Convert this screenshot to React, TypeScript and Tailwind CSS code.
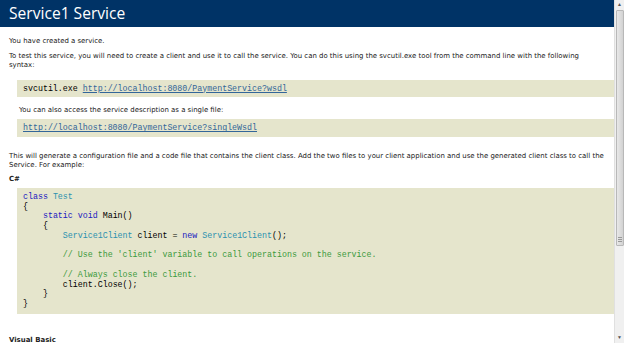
import React from 'react';

const kw = 'text-[#2020c0]';
const type = 'text-[#2b91af]';
const comment = 'text-[#3c9a3c]';

const Code = ({ children, className = '' }: { children: React.ReactNode; className?: string }) => (
  <pre
    className={`ml-[17px] bg-[#e5e5cc] px-[6px] font-['Liberation_Mono','Courier_New',monospace] text-[8.3px] leading-[9.73px] text-black whitespace-pre ${className}`}
  >
    {children}
  </pre>
);

const Link = ({ href }: { href: string }) => (
  <a className="text-[#336699] underline">{href}</a>
);

const Scrollbar = () => (
  <div className="w-[10px] h-full bg-[#f0f0f0] border-l border-[#e0e0e0] flex flex-col items-center">
    <div className="h-[10px] flex items-center justify-center text-[5px] text-[#555]">▲</div>
    <div className="w-[8px] h-[236px] bg-gradient-to-r from-[#e8e8e8] to-[#d2d2d2] border border-[#b8b8b8] rounded-[1px] flex items-end justify-center pb-[3px]">
      <div className="flex flex-col gap-[1px]">
        <div className="w-[4px] h-px bg-[#999]" />
        <div className="w-[4px] h-px bg-[#999]" />
        <div className="w-[4px] h-px bg-[#999]" />
      </div>
    </div>
    <div className="flex-1" />
    <div className="h-[10px] flex items-center justify-center text-[5px] text-[#555]">▼</div>
  </div>
);

export default function App() {
  return (
    <div className="w-[624px] h-[343px] overflow-hidden flex bg-white">
      <div className="flex-1 min-w-0 font-['DejaVu_Sans','Verdana',sans-serif] text-[6.95px] leading-[9.5px] text-[#222]">
        <div className="h-[27px] bg-[#003366] pl-[9px] flex items-end">
          <h1 className="font-['Open_Sans','Noto_Sans',sans-serif] text-[15.6px] leading-none text-white pb-[5px]">
            Service1 Service
          </h1>
        </div>

        <p className="ml-[9px] mt-[9.5px]">You have created a service.</p>
        <p className="ml-[9px] mt-[5.5px] pr-[14px]">
          To test this service, you will need to create a client and use it to call the service. You can do this using the svcutil.exe tool from the command line with the following syntax:
        </p>

        <Code className="mt-[9.5px] py-[3.5px]">
          svcutil.exe <Link href="http://localhost:8080/PaymentService?wsdl" />
        </Code>

        <p className="ml-[19px] mt-[9px]">You can also access the service description as a single file:</p>

        <Code className="mt-[4px] py-[4px]">
          <Link href="http://localhost:8080/PaymentService?singleWsdl" />
        </Code>

        <p className="ml-[9px] mt-[15px]">
          This will generate a configuration file and a code file that contains the client class. Add the two files to your client application and use the generated client class to call the Service. For example:
        </p>

        <p className="ml-[9px] mt-[4.5px] font-bold">C#</p>

        <Code className="mt-[3px] pt-[4px] pb-[5px]">
          <span className={kw}>class</span> <span className={type}>Test</span>{'\n'}
          {'{\n'}
          {'    '}<span className={kw}>static</span> <span className={kw}>void</span> Main(){'\n'}
          {'    {\n'}
          {'        '}<span className={type}>Service1Client</span> client = <span className={kw}>new</span> <span className={type}>Service1Client</span>();{'\n'}
          {'\n'}
          {'        '}<span className={comment}>// Use the 'client' variable to call operations on the service.</span>{'\n'}
          {'\n'}
          {'        '}<span className={comment}>// Always close the client.</span>{'\n'}
          {'        '}client.Close();{'\n'}
          {'    }\n'}
          {'}'}
        </Code>

        <p className="ml-[9px] mt-[22px] font-bold">Visual Basic</p>
      </div>
      <Scrollbar />
    </div>
  );
}
